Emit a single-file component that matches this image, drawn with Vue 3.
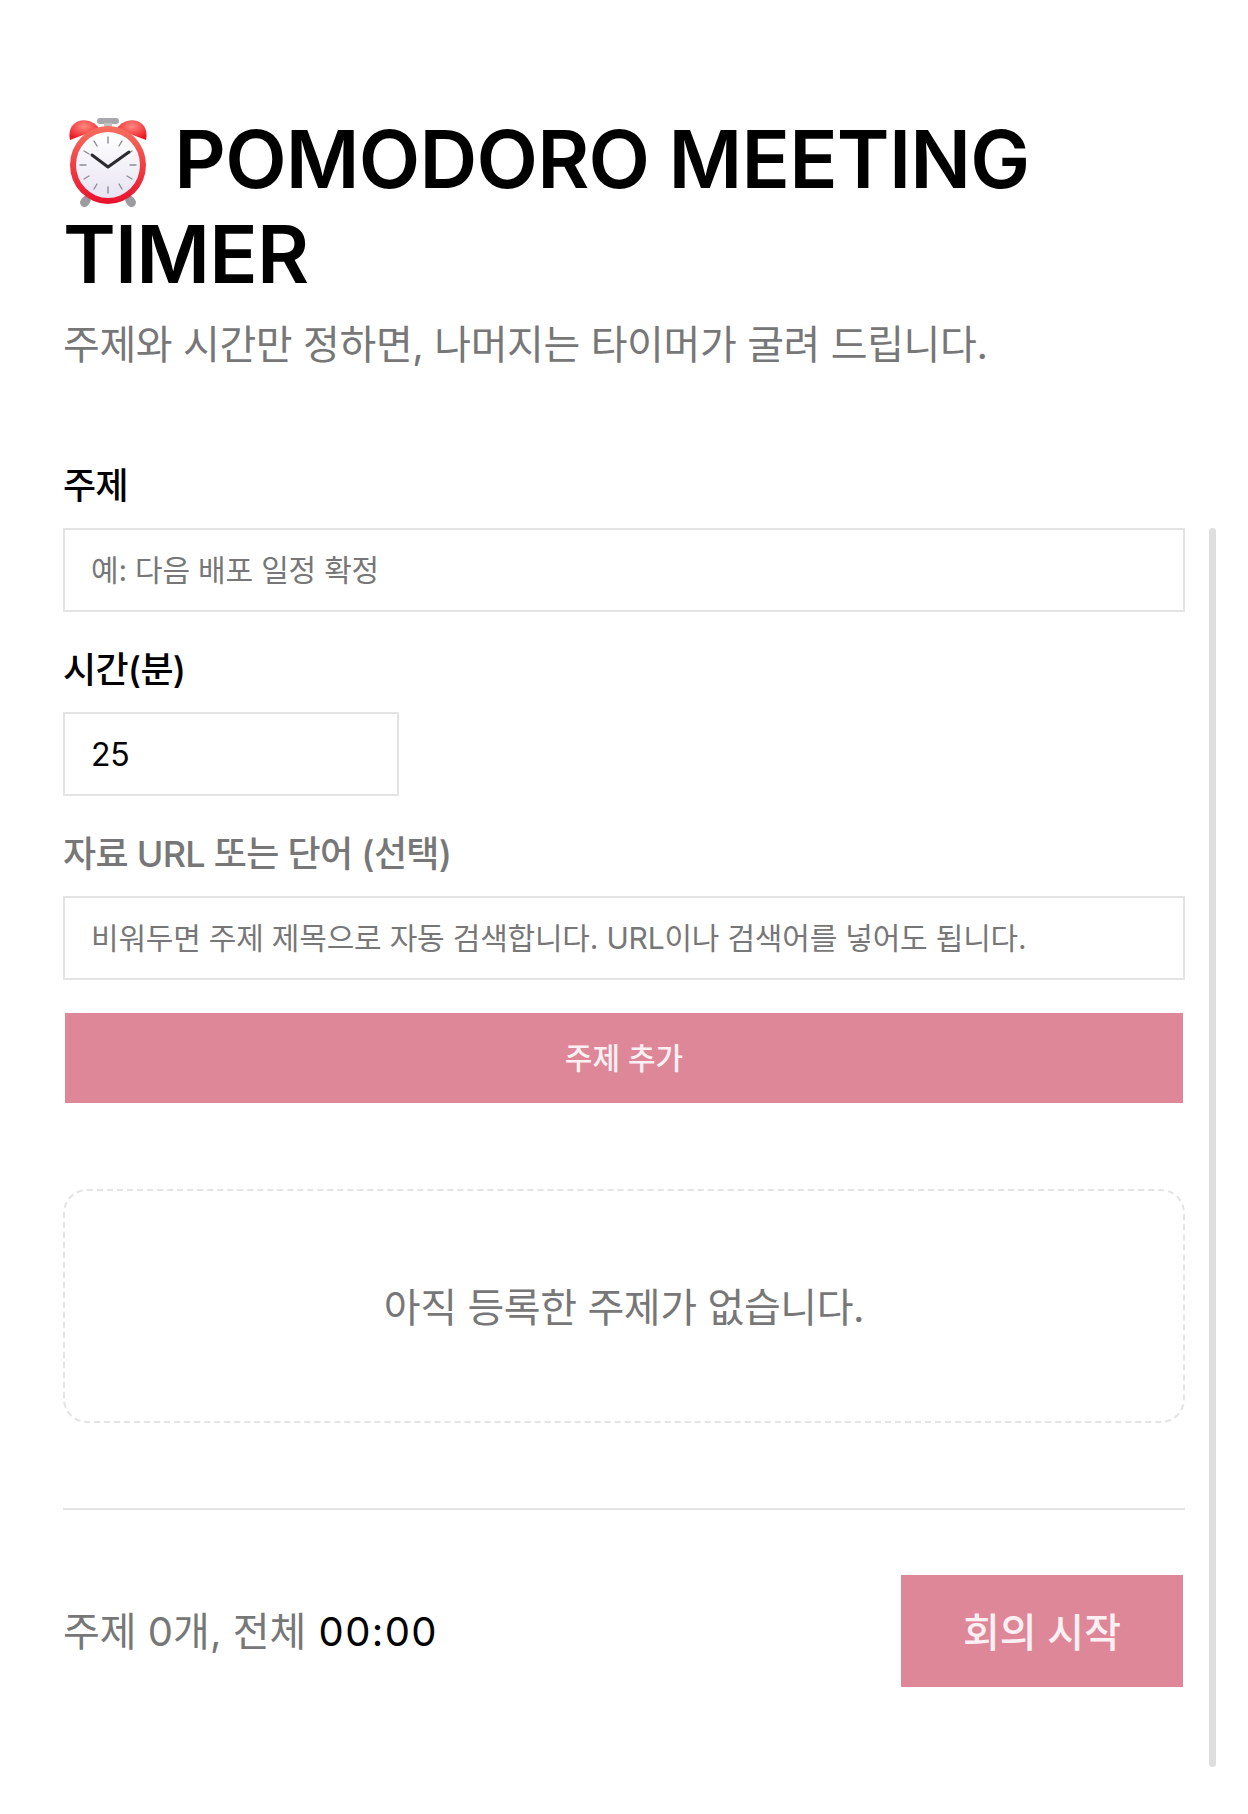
<template>
  <div class="page">
    <header class="head">
      <h1>
        <svg class="clock" viewBox="0 0 80 90" aria-hidden="true">
          <defs>
            <linearGradient id="ring" x1="0" y1="0" x2="0" y2="1">
              <stop offset="0" stop-color="#f6705f" />
              <stop offset="1" stop-color="#e8112d" />
            </linearGradient>
            <linearGradient id="dial" x1="0" y1="0" x2="0" y2="1">
              <stop offset="0" stop-color="#ffffff" />
              <stop offset="1" stop-color="#e8e4f3" />
            </linearGradient>
            <radialGradient id="bell" cx="0.5" cy="0.3" r="0.7">
              <stop offset="0" stop-color="#ff8a80" />
              <stop offset="1" stop-color="#ec1520" />
            </radialGradient>
          </defs>
          <path d="M2 23 C-1 9 9 1 21 4 C27 6 30 9 31 12 Z" fill="url(#bell)" />
          <path d="M78 23 C81 9 71 1 59 4 C53 6 50 9 49 12 Z" fill="url(#bell)" />
          <rect x="29" y="1" width="22" height="6" rx="3" fill="#a9a9ad" />
          <rect x="36" y="6" width="8" height="6" fill="#c2c2c6" />
          <rect x="13" y="78" width="9" height="12" rx="4.5" transform="rotate(35 17 84)" fill="#9b9ba0" />
          <rect x="58" y="78" width="9" height="12" rx="4.5" transform="rotate(-35 63 84)" fill="#9b9ba0" />
          <ellipse cx="40" cy="48" rx="38" ry="39" fill="url(#ring)" />
          <ellipse cx="40" cy="48" rx="32" ry="33" fill="url(#dial)" />
          <g stroke="#8c8c92" stroke-width="1.4" stroke-linecap="round">
            <path d="M40 20 V26 M40 70 V76 M12 48 H18 M62 48 H68" />
            <path d="M26 24 L29 29 M54 24 L51 29 M16 34 L21 37 M64 34 L59 37 M16 62 L21 59 M64 62 L59 59 M26 72 L29 67 M54 72 L51 67" />
          </g>
          <path d="M24 38 L40 50 L61 35" fill="none" stroke="#2b2b30" stroke-width="3" stroke-linecap="round" stroke-linejoin="round" />
        </svg>
        POMODORO MEETING TIMER
      </h1>
      <p class="sub">주제와 시간만 정하면, 나머지는 타이머가 굴려 드립니다.</p>
    </header>

    <form class="form" @submit.prevent="addTopic">
      <label for="topic">주제</label>
      <input id="topic" v-model="title" placeholder="예: 다음 배포 일정 확정" />
      <label for="minutes">시간(분)</label>
      <input id="minutes" v-model="minutes" class="short" />
      <label for="resource" class="muted">자료 URL 또는 단어 (선택)</label>
      <input id="resource" v-model="resource" placeholder="비워두면 주제 제목으로 자동 검색합니다. URL이나 검색어를 넣어도 됩니다." />
      <button type="submit" class="add">주제 추가</button>
    </form>

    <div class="empty">아직 등록한 주제가 없습니다.</div>

    <footer class="foot">
      <span class="total">주제 {{ topics.length }}개, 전체 <b>00:00</b></span>
      <button type="button" class="start">회의 시작</button>
    </footer>

    <div class="scrollbar"></div>
  </div>
</template>

<script setup>
import { ref } from 'vue'

const title = ref('')
const minutes = ref('25')
const resource = ref('')
const topics = ref([])

function addTopic() {
  if (!title.value) return
  topics.value.push({ title: title.value, minutes: minutes.value })
  title.value = ''
}
</script>

<style>
body {
  margin: 0;
  background: #fff;
}
</style>

<style scoped>
.page {
  position: relative;
  height: 1814px;
  box-sizing: border-box;
  padding: 111px 63px 0;
  font-family: Inter, "Noto Sans CJK KR", sans-serif;
  color: #000;
}

.head h1 {
  margin: 0;
  font-size: 80px;
  line-height: 95px;
  font-weight: 600;
  letter-spacing: -0.8px;
}

.clock {
  width: 80px;
  height: 90px;
  margin: -20px 7px -20px 5px;
  vertical-align: 1px;
}

.sub {
  margin: 16px 0 0;
  font-size: 40px;
  line-height: 56px;
  letter-spacing: -0.4px;
  color: #777;
}

.form {
  display: flex;
  flex-direction: column;
  margin-top: 89px;
}

label {
  font-size: 36px;
  line-height: 48px;
  font-weight: 500;
  letter-spacing: -0.7px;
  margin-bottom: 18px;
}

input + label {
  margin-top: 34px;
}

label.muted {
  color: #777;
}

input {
  box-sizing: border-box;
  height: 84px;
  padding: 0 26px;
  border: 2px solid #e4e4e4;
  outline: none;
  font-family: inherit;
  font-size: 30px;
  letter-spacing: -0.2px;
  color: #000;
}

input::placeholder {
  color: #777;
}

input.short {
  width: 336px;
  font-size: 32px;
}

button {
  border: none;
  border-radius: 0;
  background: #de8799;
  color: #fdf0f3;
  font-family: inherit;
  font-weight: 500;
}

.add {
  height: 90px;
  margin: 33px 2px 0;
  padding-bottom: 6px;
  font-size: 30px;
}

.empty {
  box-sizing: border-box;
  height: 234px;
  margin-top: 86px;
  padding-bottom: 3px;
  border: 2px dashed #e4e4e4;
  border-radius: 24px;
  display: flex;
  align-items: center;
  justify-content: center;
  font-size: 40px;
  letter-spacing: -0.4px;
  color: #777;
}

.foot {
  margin-top: 85px;
  padding: 65px 2px 0 0;
  border-top: 2px solid #e4e4e4;
  display: flex;
  justify-content: space-between;
  align-items: center;
}

.total {
  margin-top: -4px;
  font-size: 40px;
  color: #777;
}

.total b {
  margin-left: 1px;
  font-weight: 400;
  letter-spacing: 1.4px;
  color: #000;
}

.start {
  width: 282px;
  height: 112px;
  padding-bottom: 3px;
  font-size: 40px;
}

.scrollbar {
  position: absolute;
  left: 1209px;
  top: 528px;
  width: 7px;
  height: 1239px;
  border-radius: 4px;
  background: #dedede;
}
</style>
